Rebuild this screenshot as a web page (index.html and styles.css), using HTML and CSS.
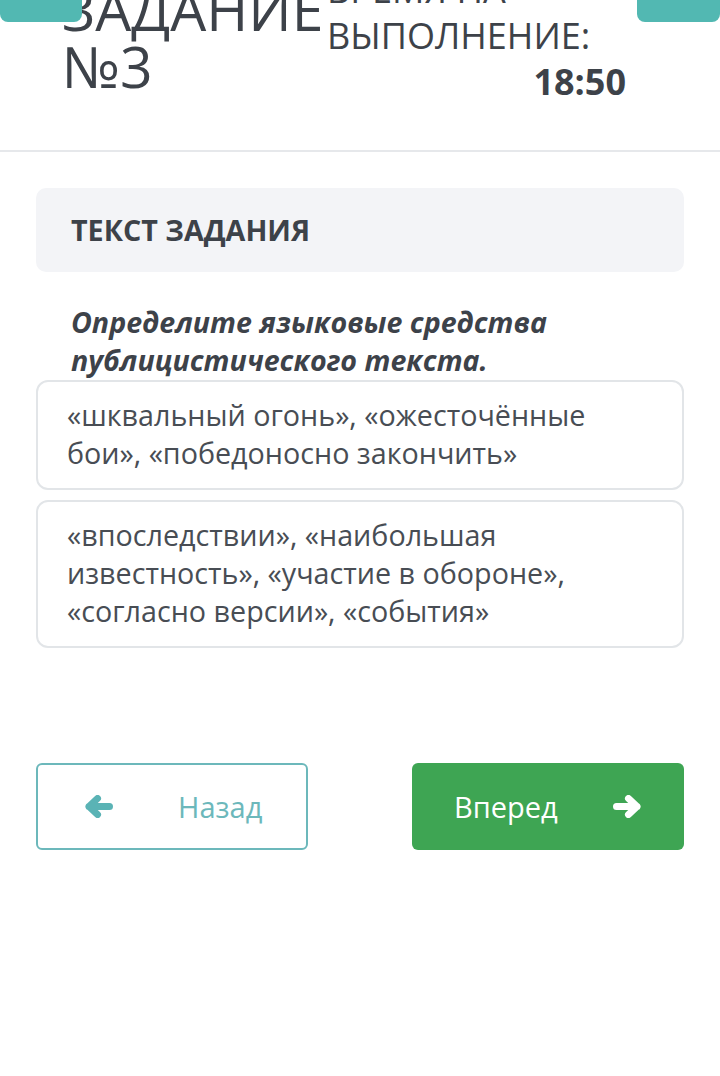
FILE: index.html
```html
<!DOCTYPE html>
<html lang="ru">
<head>
  <meta charset="UTF-8">
  <meta name="viewport" content="width=device-width, initial-scale=1.0">
  <title>Задание №3</title>
  <link rel="stylesheet" href="styles.css">
</head>
<body>
  <a href="#" class="corner-button corner-left"></a>
  <a href="#" class="corner-button corner-right"></a>

  <header class="task-header">
    <h1 class="task-title">ЗАДАНИЕ<br>№3</h1>
    <div class="timer">
      <div class="timer-label">ВРЕМЯ НА<br>ВЫПОЛНЕНИЕ:</div>
      <div class="timer-value">18:50</div>
    </div>
  </header>

  <main class="content">
    <div class="section-title">ТЕКСТ ЗАДАНИЯ</div>

    <p class="question">Определите языковые средства публицистического текста.</p>

    <div class="answers">
      <label class="answer">«шквальный огонь», «ожесточённые бои», «победоносно закончить»</label>
      <label class="answer">«впоследствии», «наибольшая известность», «участие в обороне», «согласно версии», «события»</label>
    </div>

    <div class="nav-buttons">
      <button class="btn btn-back">
        <svg class="arrow" viewBox="0 0 28 23"><path d="M4 11.5H24.5M12.5 3.5L4 11.5L12.5 19.5"/></svg>
        <span>Назад</span>
      </button>
      <button class="btn btn-next">
        <span>Вперед</span>
        <svg class="arrow" viewBox="0 0 28 23"><path d="M3.5 11.5H24M15.5 3.5L24 11.5L15.5 19.5"/></svg>
      </button>
    </div>
  </main>
</body>
</html>
```

FILE: styles.css
```css
body {
  margin: 0;
  background: #fff;
  color: #3d4249;
  font-family: 'Open Sans', 'Noto Sans', sans-serif;
  overflow: hidden;
}

/* кнопки-уголки сверху (страница прокручена) */
.corner-button {
  position: absolute;
  top: -20px;
  width: 82px;
  height: 42px;
  background-color: #52b8b2;
  border-radius: 8px;
}

.corner-left {
  left: 0;
}

.corner-right {
  right: 0;
  width: 83px;
}

.task-header {
  display: flex;
  margin-top: -33px;
  padding: 0 0 45px 62px;
  border-bottom: 2px solid #e6e8eb;
}

.task-title {
  width: 265px;
  margin: 14px 0 0;
  font-size: 57px;
  font-weight: 400;
  line-height: 57px;
  white-space: nowrap;
}

.timer {
  width: 299px;
  font-size: 36px;
  line-height: 46px;
  white-space: nowrap;
}

.timer-value {
  text-align: right;
  font-weight: 700;
}

.content {
  padding: 36px 36px 0;
}

.section-title {
  background-color: #f3f4f7;
  border-radius: 10px;
  padding: 22px 35px;
  font-size: 28.7px;
  font-weight: 700;
  line-height: 40px;
}

.question {
  margin: 31px 0 1px;
  padding: 0 35px;
  font-size: 28.6px;
  font-weight: 700;
  font-style: italic;
  line-height: 38px;
}

.answers {
  display: flex;
  flex-direction: column;
  gap: 10px;
}

.answer {
  display: block;
  border: 2px solid #e2e5e8;
  border-radius: 12px;
  padding: 14px 29px 16px;
  font-size: 28.7px;
  line-height: 38px;
  color: #484d54;
}

.nav-buttons {
  display: flex;
  justify-content: space-between;
  margin-top: 115px;
}

.btn {
  display: flex;
  align-items: center;
  width: 272px;
  height: 87px;
  border-radius: 6px;
  font-family: inherit;
  font-size: 29px;
  cursor: pointer;
}

.btn .arrow {
  width: 28px;
  height: 23px;
  fill: none;
  stroke: currentColor;
  stroke-width: 7;
  stroke-linecap: round;
  stroke-linejoin: round;
}

.btn-back {
  background: #fff;
  border: 2px solid #6cb8bb;
  color: #6cb8bb;
  padding: 0 0 0 47px;
  gap: 65px;
}

.btn-back .arrow {
  color: #5ab3b5;
}

.btn-next {
  background-color: #3ea553;
  border: none;
  color: #fff;
  padding: 0 0 0 42px;
  gap: 55px;
}
```
